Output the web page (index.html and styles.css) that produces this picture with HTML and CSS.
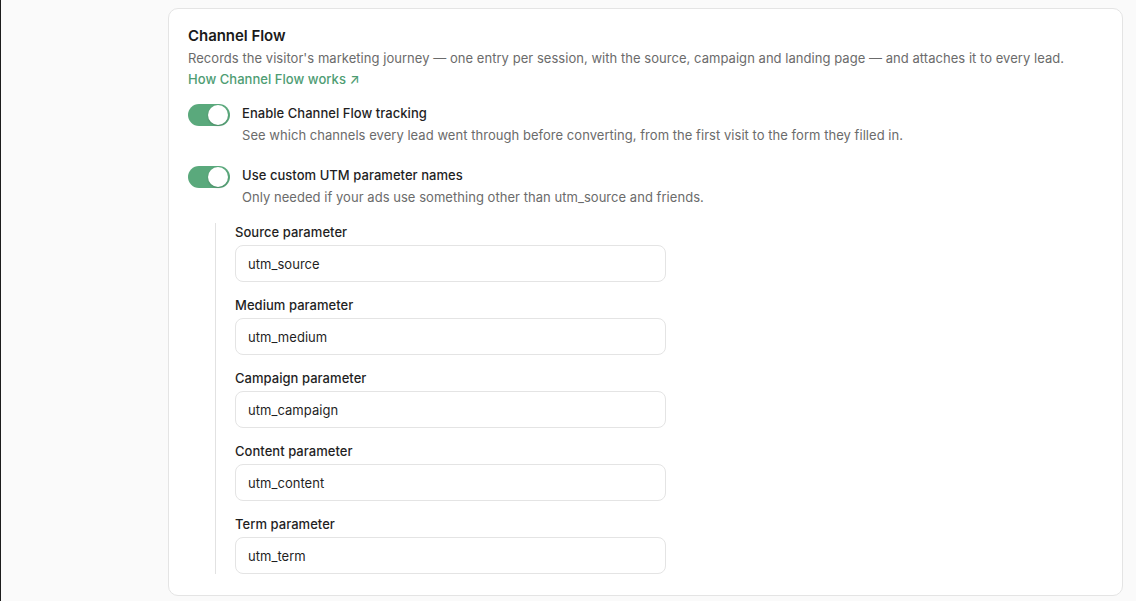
FILE: index.html
```html
<!DOCTYPE html>
<html lang="en">
<head>
<meta charset="utf-8">
<title>Channel Flow</title>
<link rel="stylesheet" href="styles.css">
</head>
<body>
<div class="page">
  <section class="card">
    <h2 class="card-title">Channel Flow</h2>
    <p class="card-desc">Records the visitor's marketing journey — one entry per session, with the source, campaign and landing page — and attaches it to every lead.</p>
    <a class="card-link" href="#">How Channel Flow works <span class="arrow">↗</span></a>

    <div class="setting">
      <span class="toggle on"><span class="knob"></span></span>
      <div class="setting-text">
        <div class="setting-label">Enable Channel Flow tracking</div>
        <div class="setting-help">See which channels every lead went through before converting, from the first visit to the form they filled in.</div>
      </div>
    </div>

    <div class="setting">
      <span class="toggle on"><span class="knob"></span></span>
      <div class="setting-text">
        <div class="setting-label">Use custom UTM parameter names</div>
        <div class="setting-help">Only needed if your ads use something other than utm_source and friends.</div>
      </div>
    </div>

    <div class="params">
      <label class="field">
        <span class="field-label">Source parameter</span>
        <input class="field-input" type="text" value="utm_source">
      </label>
      <label class="field">
        <span class="field-label">Medium parameter</span>
        <input class="field-input" type="text" value="utm_medium">
      </label>
      <label class="field">
        <span class="field-label">Campaign parameter</span>
        <input class="field-input" type="text" value="utm_campaign">
      </label>
      <label class="field">
        <span class="field-label">Content parameter</span>
        <input class="field-input" type="text" value="utm_content">
      </label>
      <label class="field">
        <span class="field-label">Term parameter</span>
        <input class="field-input" type="text" value="utm_term">
      </label>
    </div>
  </section>
</div>
</body>
</html>
```

FILE: styles.css
```css
* { box-sizing: border-box; }

html, body {
  margin: 0;
  height: 100%;
}

body {
  background: #fafafa;
  font-family: Inter, "Noto Sans", "Liberation Sans", sans-serif;
  color: #1f1f1f;
  letter-spacing: 0.04px;
  -webkit-font-smoothing: antialiased;
  overflow: hidden;
}

.page {
  min-height: 100%;
  border-left: 1px solid #1c1c1c;
  padding: 8px 13px 0 167px;
}

.card {
  background: #ffffff;
  border: 1px solid #e4e4e4;
  border-radius: 10px;
  padding: 17px 19px 19px 19px;
  height: 588px;
}

.card-title {
  margin: 0;
  font-size: 15px;
  line-height: 20px;
  font-weight: 600;
  color: #1a1a1a;
  letter-spacing: -0.05px;
}

.card-desc {
  margin: 2px 0 0;
  font-size: 13px;
  line-height: 20px;
  color: #6b6b6b;
}

.card-link {
  display: inline-block;
  font-size: 13px;
  line-height: 19px;
  color: #4e9d73;
  font-weight: 500;
  text-decoration: none;
}

.arrow {
  font-size: 13px;
}

.setting {
  display: flex;
  gap: 12px;
  align-items: flex-start;
  margin-top: 14px;
}

.setting + .setting {
  margin-top: 20px;
}

.toggle {
  flex: none;
  width: 42px;
  height: 22px;
  border-radius: 11px;
  background: #d4d4d4;
  display: flex;
  align-items: center;
  padding: 2px;
  margin-top: 1px;
}

.toggle.on {
  background: #5aa97c;
  justify-content: flex-end;
}

.knob {
  width: 20px;
  height: 20px;
  border-radius: 50%;
  background: #ffffff;
  box-shadow: 0 1px 2px rgba(0, 0, 0, 0.2);
}

.setting-text {
  display: flex;
  flex-direction: column;
  gap: 2px;
}

.setting-label {
  font-size: 13px;
  line-height: 20px;
  font-weight: 500;
  color: #1f1f1f;
}

.setting-help {
  font-size: 13px;
  line-height: 20px;
  color: #6b6b6b;
}

.params {
  margin: 16px 0 0 27px;
  border-left: 1px solid #e2e2e2;
  padding-left: 19px;
  display: flex;
  flex-direction: column;
  gap: 14px;
}

.field {
  display: flex;
  flex-direction: column;
  gap: 4px;
  width: 431px;
}

.field-label {
  font-size: 13px;
  line-height: 18px;
  font-weight: 500;
  color: #1f1f1f;
}

.field-input {
  height: 37px;
  border: 1px solid #e4e4e4;
  border-radius: 8px;
  padding: 0 12px;
  font-family: inherit;
  font-size: 13px;
  letter-spacing: inherit;
  color: #1f1f1f;
  background: #ffffff;
  outline: none;
}
```
